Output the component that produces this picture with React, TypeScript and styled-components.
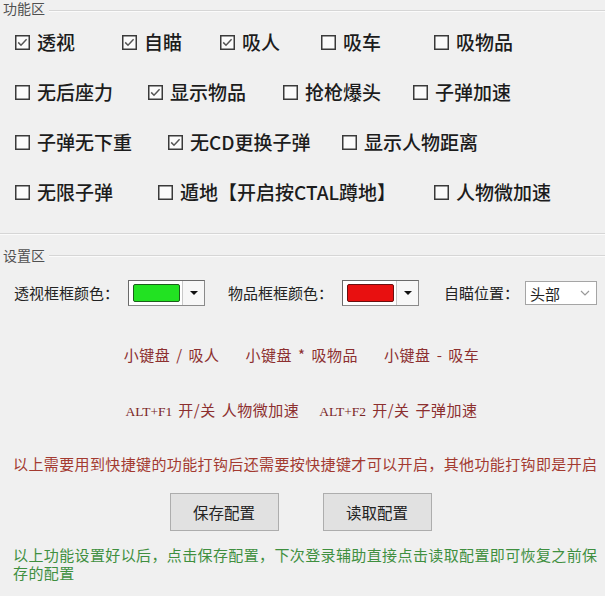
import React from 'react';
import styled, { createGlobalStyle } from 'styled-components';

const GlobalStyle = createGlobalStyle`
  html, body {
    margin: 0;
    padding: 0;
    background: #f0f0f0;
  }
  body {
    font-family: "Noto Sans CJK SC", "Noto Sans", sans-serif;
    color: #1c1c1c;
  }
`;

const Page = styled.div`
  width: 605px;
  height: 596px;
  overflow: hidden;
  background: #f0f0f0;
`;

const GroupHeader = styled.div<{ $height: number; $lineShift?: number }>`
  display: flex;
  align-items: center;
  height: ${({ $height }) => $height}px;
  padding-left: 3px;

  &::after {
    content: '';
    flex: 1;
    height: 1px;
    margin-left: 4px;
    background: #d6d6d6;
    box-shadow: 0 1px 0 #fbfbfb;
    transform: translateY(${({ $lineShift }) => $lineShift ?? 0}px);
  }
`;

const GroupTitle = styled.span`
  font-size: 14px;
  line-height: 17px;
  color: #505050;
`;

const FunctionGroup = styled.section`
  padding-bottom: 16px;
  border-bottom: 1px solid #d6d6d6;
  box-shadow: 0 1px 0 #fbfbfb;
`;

const CheckRow = styled.div`
  display: flex;
  align-items: center;
  height: 50px;
  padding-left: 15px;
`;

const CheckItem = styled.label<{ $width?: number }>`
  display: flex;
  align-items: center;
  gap: 7px;
  flex: 0 0 ${({ $width }) => ($width ? `${$width}px` : 'auto')};
  font-size: 19px;
  font-weight: 500;
  line-height: 24px;
  color: #1c1c1c;
  white-space: nowrap;
`;

const BoxSvg = styled.svg`
  flex: 0 0 15px;
  display: block;
`;

const CheckBox = ({ checked }: { checked?: boolean }) => (
  <BoxSvg width="15" height="15" viewBox="0 0 15 15">
    <rect x="0.75" y="0.75" width="13.5" height="13.5" fill="#fbfbfb" stroke="#3a3a3a" strokeWidth="1.5" />
    {checked && (
      <polyline points="3.2,7.4 6,10.2 11.6,4.3" fill="none" stroke="#555" strokeWidth="1.5" />
    )}
  </BoxSvg>
);

const SettingsGroup = styled.section`
  margin-top: 11px;
`;

const SettingRow = styled.div`
  display: flex;
  align-items: center;
  height: 26px;
  margin-top: 14px;
  padding-left: 14px;
`;

const Field = styled.div<{ $width?: number }>`
  display: flex;
  align-items: center;
  flex: 0 0 ${({ $width }) => ($width ? `${$width}px` : 'auto')};
`;

const FieldLabel = styled.span<{ $width: number }>`
  flex: 0 0 ${({ $width }) => $width}px;
  font-size: 15px;
  line-height: 20px;
  color: #222;
  white-space: nowrap;
`;

const ColorCombo = styled.div`
  display: flex;
  align-items: stretch;
  width: 77px;
  height: 26px;
  box-sizing: border-box;
  border: 1px solid #8a8a8a;
  border-top-color: #6a6a6a;
  border-left-color: #6a6a6a;
  background: #fff;
`;

const SwatchCell = styled.div`
  flex: 1;
  display: flex;
  padding: 3px 2px 3px 4px;
`;

const Swatch = styled.div<{ $color: string; $edge: string }>`
  flex: 1;
  background: ${({ $color }) => $color};
  border: 1px solid ${({ $edge }) => $edge};
  border-radius: 2px;
`;

const ArrowButton = styled.div`
  flex: 0 0 21px;
  display: flex;
  align-items: center;
  justify-content: center;
  background: #f7f7f7;
  border-left: 1px solid #c8c8c8;

  &::after {
    content: '';
    border-left: 4px solid transparent;
    border-right: 4px solid transparent;
    border-top: 4px solid #111;
  }
`;

const SelectBox = styled.div`
  display: flex;
  align-items: center;
  justify-content: space-between;
  width: 72px;
  height: 24px;
  box-sizing: border-box;
  padding: 0 6px 0 4px;
  border: 1px solid #a5a5a5;
  background: #fff;
  font-size: 15px;
  color: #222;
`;

const HotkeyLine = styled.div<{ $top: number; $gap: number }>`
  display: flex;
  justify-content: center;
  gap: ${({ $gap }) => $gap}px;
  margin-top: ${({ $top }) => $top}px;
  padding-right: 2px;
  font-size: 15px;
  letter-spacing: 0.5px;
  line-height: 20px;
  color: #8c2f2f;
`;

const HotkeyGroup = styled.span`
  display: flex;
  align-items: baseline;
  gap: 6px;
  white-space: nowrap;
`;

const KeyName = styled.span`
  font-family: "Liberation Serif", serif;
  font-size: 13.5px;
  letter-spacing: 0;
  color: #7a2626;
`;

const Notice = styled.div<{ $color: string; $top: number; $lineHeight: number }>`
  margin-top: ${({ $top }) => $top}px;
  padding-left: 13px;
  font-size: 15px;
  letter-spacing: 0.38px;
  line-height: ${({ $lineHeight }) => $lineHeight}px;
  color: ${({ $color }) => $color};
`;

const ButtonRow = styled.div`
  display: flex;
  justify-content: center;
  gap: 44px;
  margin-top: 19px;
  padding-right: 4px;
`;

const Button = styled.button`
  width: 109px;
  height: 38px;
  border: 1px solid #adadad;
  background: #e1e1e1;
  font-family: "Noto Sans CJK SC", sans-serif;
  font-size: 15.5px;
  color: #222;
  padding: 0;
`;

const ChevronSvg = styled.svg`
  display: block;
`;

const Chevron = () => (
  <ChevronSvg width="10" height="6" viewBox="0 0 10 6">
    <polyline points="1,1 5,5 9,1" fill="none" stroke="#9a9a9a" strokeWidth="1.2" />
  </ChevronSvg>
);

type Opt = { label: string; checked?: boolean; width?: number };

const rows: Opt[][] = [
  [
    { label: '透视', checked: true, width: 107 },
    { label: '自瞄', checked: true, width: 98 },
    { label: '吸人', checked: true, width: 101 },
    { label: '吸车', width: 113 },
    { label: '吸物品' },
  ],
  [
    { label: '无后座力', width: 133 },
    { label: '显示物品', checked: true, width: 135 },
    { label: '抢枪爆头', width: 130 },
    { label: '子弹加速' },
  ],
  [
    { label: '子弹无下重', width: 153 },
    { label: '无CD更换子弹', checked: true, width: 174 },
    { label: '显示人物距离' },
  ],
  [
    { label: '无限子弹', width: 143 },
    { label: '遁地【开启按CTAL蹲地】', width: 276 },
    { label: '人物微加速' },
  ],
];

const padKeys = [
  ['/', '吸人'],
  ['*', '吸物品'],
  ['-', '吸车'],
];

const altKeys = [
  ['ALT+F1', '人物微加速'],
  ['ALT+F2', '子弹加速'],
];

export default function App() {
  return (
    <Page>
      <GlobalStyle />
      <FunctionGroup>
        <GroupHeader $height={17} $lineShift={2}>
          <GroupTitle>功能区</GroupTitle>
        </GroupHeader>
        {rows.map((row, i) => (
          <CheckRow key={i}>
            {row.map((o) => (
              <CheckItem key={o.label} $width={o.width}>
                <CheckBox checked={o.checked} />
                {o.label}
              </CheckItem>
            ))}
          </CheckRow>
        ))}
      </FunctionGroup>

      <SettingsGroup>
        <GroupHeader $height={21}>
          <GroupTitle>设置区</GroupTitle>
        </GroupHeader>
        <SettingRow>
          <Field $width={214}>
            <FieldLabel $width={114}>透视框框颜色：</FieldLabel>
            <ColorCombo>
              <SwatchCell>
                <Swatch $color="#22e222" $edge="#1d5e1d" />
              </SwatchCell>
              <ArrowButton />
            </ColorCombo>
          </Field>
          <Field $width={216}>
            <FieldLabel $width={114}>物品框框颜色：</FieldLabel>
            <ColorCombo>
              <SwatchCell>
                <Swatch $color="#e81010" $edge="#6a1010" />
              </SwatchCell>
              <ArrowButton />
            </ColorCombo>
          </Field>
          <Field>
            <FieldLabel $width={81}>自瞄位置：</FieldLabel>
            <SelectBox>
              头部
              <Chevron />
            </SelectBox>
          </Field>
        </SettingRow>

        <HotkeyLine $top={39} $gap={26}>
          {padKeys.map(([k, action]) => (
            <HotkeyGroup key={k}>
              <span>小键盘</span>
              <span>{k}</span>
              <span>{action}</span>
            </HotkeyGroup>
          ))}
        </HotkeyLine>
        <HotkeyLine $top={35} $gap={20}>
          {altKeys.map(([k, action]) => (
            <HotkeyGroup key={k}>
              <KeyName>{k}</KeyName>
              <span>开/关</span>
              <span>{action}</span>
            </HotkeyGroup>
          ))}
        </HotkeyLine>

        <Notice $color="#a33a30" $top={32} $lineHeight={20}>
          以上需要用到快捷键的功能打钩后还需要按快捷键才可以开启，其他功能打钩即是开启
        </Notice>

        <ButtonRow>
          <Button>保存配置</Button>
          <Button>读取配置</Button>
        </ButtonRow>

        <Notice $color="#3f8f3f" $top={15} $lineHeight={18}>
          以上功能设置好以后，点击保存配置，下次登录辅助直接点击读取配置即可恢复之前保存的配置
        </Notice>
      </SettingsGroup>
    </Page>
  );
}
